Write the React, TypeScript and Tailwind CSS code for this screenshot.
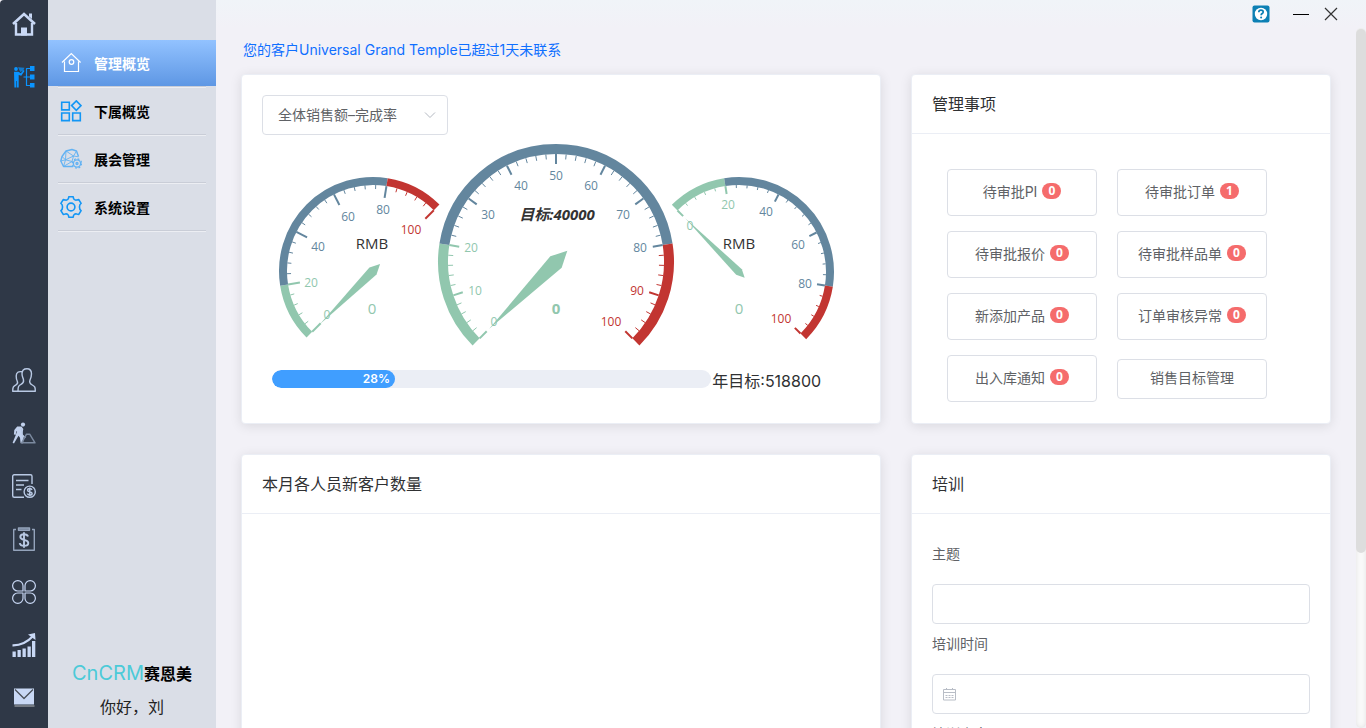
import { useState } from "react";
import type { ReactNode } from "react";

const GREEN = "#91c7ae";
const BLUE = "#63869e";
const RED = "#c23531";

type Label = { text: string; x: number; y: number };

type GaugeProps = {
  cx: number;
  cy: number;
  r: number;
  start: number;
  end: number;
  width: number;
  splits: number;
  splitLength: number;
  tickLength: number;
  pointer: number;
  labels: Label[];
  children?: ReactNode;
};

const bands = [
  { from: 0, to: 0.2, color: GREEN },
  { from: 0.2, to: 0.8, color: BLUE },
  { from: 0.8, to: 1, color: RED },
];

function colorAt(t: number) {
  if (t <= 0.2001) return GREEN;
  if (t <= 0.8001) return BLUE;
  return RED;
}

function Gauge({
  cx,
  cy,
  r,
  start,
  end,
  width,
  splits,
  splitLength,
  tickLength,
  pointer,
  labels,
  children,
}: GaugeProps) {
  const point = (t: number, radius: number) => {
    const a = ((start + (end - start) * t) * Math.PI) / 180;
    return [cx + Math.cos(a) * radius, cy - Math.sin(a) * radius];
  };
  const mid = r - width / 2;
  const total = splits * 5;

  // the pointer always rests on 0
  const a = (start * Math.PI) / 180;
  const ux = Math.cos(a);
  const uy = -Math.sin(a);
  const needle = [
    [cx - ux * pointer * 2, cy - uy * pointer * 2],
    [cx + uy * pointer, cy - ux * pointer],
    [cx + ux * r * 0.8, cy + uy * r * 0.8],
    [cx - uy * pointer, cy + ux * pointer],
  ];

  return (
    <g>
      {bands.map((band) => {
        const [x1, y1] = point(band.from, mid);
        const [x2, y2] = point(band.to, mid);
        const large = (band.to - band.from) * Math.abs(end - start) > 180 ? 1 : 0;
        return (
          <path
            key={band.color}
            d={`M${x1} ${y1}A${mid} ${mid} 0 ${large} 1 ${x2} ${y2}`}
            fill="none"
            stroke={band.color}
            strokeWidth={width}
          />
        );
      })}
      {Array.from({ length: total + 1 }, (_, i) => {
        const major = i % 5 === 0;
        const [x1, y1] = point(i / total, r - width);
        const [x2, y2] = point(i / total, r - width - (major ? splitLength : tickLength));
        return (
          <line
            key={i}
            x1={x1}
            y1={y1}
            x2={x2}
            y2={y2}
            stroke={colorAt(i / total)}
            strokeWidth={major ? 2 : 1}
          />
        );
      })}
      {labels.map((label, i) => (
        <text
          key={label.text}
          x={label.x}
          y={label.y}
          fontSize="12"
          textAnchor="middle"
          dominantBaseline="central"
          fill={colorAt(i / (labels.length - 1))}
        >
          {label.text}
        </text>
      ))}
      <polygon points={needle.map((p) => p.join(",")).join(" ")} fill={GREEN} />
      {children}
    </g>
  );
}

function Gauges() {
  return (
    <svg
      viewBox="0 0 598 225"
      className="block w-full font-['Open_Sans','Noto_Sans_CJK_SC',sans-serif]"
      role="img"
      aria-label="全体销售额-完成率"
    >
      <Gauge
        cx={111}
        cy={136}
        r={94}
        start={225}
        end={45}
        width={8}
        splits={5}
        splitLength={12}
        tickLength={4}
        pointer={5}
        labels={[
          { text: "0", x: 65, y: 179 },
          { text: "20", x: 49, y: 147 },
          { text: "40", x: 56, y: 111 },
          { text: "60", x: 86, y: 81 },
          { text: "80", x: 121, y: 74 },
          { text: "100", x: 149, y: 94 },
        ]}
      >
        <text x="110" y="108" fontSize="15" textAnchor="middle" dominantBaseline="central" fill="#333">
          RMB
        </text>
        <text x="110" y="173" fontSize="15" textAnchor="middle" dominantBaseline="central" fill={GREEN}>
          0
        </text>
      </Gauge>
      <Gauge
        cx={477}
        cy={137}
        r={95}
        start={135}
        end={-45}
        width={8}
        splits={5}
        splitLength={8}
        tickLength={3}
        pointer={4}
        labels={[
          { text: "0", x: 428, y: 90 },
          { text: "20", x: 466, y: 69 },
          { text: "40", x: 504, y: 76 },
          { text: "60", x: 536, y: 109 },
          { text: "80", x: 543, y: 148 },
          { text: "100", x: 519, y: 183 },
        ]}
      >
        <text x="477" y="108" fontSize="15" textAnchor="middle" dominantBaseline="central" fill="#333">
          RMB
        </text>
        <text x="477" y="173" fontSize="15" textAnchor="middle" dominantBaseline="central" fill={GREEN}>
          0
        </text>
      </Gauge>
      <Gauge
        cx={294}
        cy={127}
        r={118}
        start={225}
        end={-45}
        width={10}
        splits={10}
        splitLength={10}
        tickLength={5}
        pointer={8}
        labels={[
          { text: "0", x: 232, y: 186 },
          { text: "10", x: 213, y: 155 },
          { text: "20", x: 209, y: 112 },
          { text: "30", x: 226, y: 79 },
          { text: "40", x: 259, y: 50 },
          { text: "50", x: 294, y: 40 },
          { text: "60", x: 329, y: 50 },
          { text: "70", x: 361, y: 79 },
          { text: "80", x: 378, y: 112 },
          { text: "90", x: 375, y: 155 },
          { text: "100", x: 349, y: 186 },
        ]}
      >
        <text
          x="295"
          y="79"
          fontSize="15"
          fontWeight="bold"
          fontStyle="italic"
          textAnchor="middle"
          dominantBaseline="central"
          fill="#333"
        >
          目标:40000
        </text>
        <text
          x="294"
          y="173"
          fontSize="15"
          fontWeight="bold"
          textAnchor="middle"
          dominantBaseline="central"
          fill={GREEN}
        >
          0
        </text>
      </Gauge>
    </svg>
  );
}

function RailIcon({ children }: { children: ReactNode }) {
  return (
    <svg
      viewBox="0 0 24 24"
      className="size-6"
      fill="none"
      stroke="#b9c9e4"
      strokeWidth="1.4"
      strokeLinejoin="round"
      aria-hidden="true"
    >
      {children}
    </svg>
  );
}

const railTop = [
  {
    name: "首页",
    icon: (
      <RailIcon>
        <path d="M1 12 12 2 23 12" stroke="#c9d8f5" strokeWidth="2.6" strokeLinejoin="miter" />
        <path d="M17 1.5h3V7l-3-2.5z" fill="#c9d8f5" stroke="none" />
        <path d="M4 11v11.5h16V11" stroke="#c9d8f5" strokeWidth="2.4" strokeLinejoin="miter" />
        <path d="M9 15.5h6v8H9z" fill="#c9d8f5" stroke="none" />
      </RailIcon>
    ),
  },
  {
    name: "管理",
    icon: (
      <RailIcon>
        <g fill="#0a94ff" stroke="none">
          <circle cx="4" cy="4" r="1.9" />
          <path d="M2 6.800h4.500l2.300 1.500L11.500 5l1 .9L9.300 10.800l-2.600-.7V22.500H4.900V16h-.6v6.500H2.400z" />
          <path d="M6 2.200 12.500 2.800l-1.300 3-3 1.200z" opacity=".7" />
          <path d="M18 1h4.500v5H18zM18 9.500h4.500v5H18zM18 18h4.500v4.500H18z" />
        </g>
        <path d="M18 3.500h-3.500v17H18M11.500 12H18" stroke="#0a94ff" strokeWidth="1.2" />
      </RailIcon>
    ),
  },
];

const railBottom = [
  {
    name: "客户",
    icon: (
      <RailIcon>
        <path d="M15 .8c-3.500 0-5 2-5 5 0 3 1 3.500 1.500 6 .5 2.500-.5 3.500-2.500 4.500-2.500 1.200-3 2.200-3 6.900h17.300c0-4-.3-4.800-3-6.200-2.500-1.300-3.300-2.500-2.300-5 1.200-2.700 1.500-3.700 1.500-6.200 0-3-1.500-5-4.500-5Z" />
        <path d="M10.200 3.800C6.500 3 4.200 4.500 4.200 8c0 2 .2 3.500 1 5 .8 1.600.2 3-1.200 3.800C1.500 18.200.7 18.800.7 23.200H6" />
      </RailIcon>
    ),
  },
  {
    name: "工地",
    icon: (
      <RailIcon>
        <g fill="#c1d0ec" stroke="none">
          <circle cx="11" cy="3.600" r="2.100" />
          <path d="M5.200 5.500 9.500 5.600l1.800 2.400-1 5 1.400 2-.6 7.200H8.600l-.6-5.500-1.500-2L4.300 18.500 2 22.400.6 21.700 3.800 14l1.300-4-1 .8-.3 3-1.900-.4.400-4.400z" />
        </g>
        <path d="m9.500 8 .8 6 3 3" />
        <path d="m9.700 21.800 4.800-8.600h3.200l5.300 8.600Z" stroke="#7c8aa0" />
      </RailIcon>
    ),
  },
  {
    name: "账单",
    icon: (
      <RailIcon>
        <path d="M12 23.200H2.200A1.500 1.500 0 0 1 .7 21.700V2.200A1.500 1.500 0 0 1 2.200.7h16.300A1.500 1.500 0 0 1 20 2.200V10" />
        <path d="M4 6.500h12.500M4 11h8M4 15.500h5.500" />
        <circle cx="17.700" cy="17.700" r="5.600" />
        <path
          d="M20 15.900c-.4-.9-1.200-1.300-2.200-1.300-1.300 0-2.200.6-2.200 1.600 0 2.200 4.500.9 4.500 3.200 0 1-.9 1.600-2.300 1.600-1.200 0-2.100-.5-2.400-1.400M17.800 13.400v8.700"
          strokeWidth="1.500"
        />
      </RailIcon>
    ),
  },
  {
    name: "报销",
    icon: (
      <RailIcon>
        <path d="M4 2.500H1.700v20.800h20.600V2.500H20" stroke="#94a3bb" />
        <path d="M6.500 1h11v2.300h-11z" stroke="#94a3bb" fill="#66758c" />
        <path
          d="M16 9.500c-.5-1.700-2-2.300-4-2.300-2.200 0-3.700 1-3.700 2.800 0 4 8 1.800 8 6 0 1.800-1.700 2.900-4.200 2.900-2.400 0-4-.9-4.400-2.800M12 5.300v15.500"
          strokeWidth="1.900"
        />
      </RailIcon>
    ),
  },
  {
    name: "应用",
    icon: (
      <RailIcon>
        <path
          d="M11 11H5.800A5.200 5.200 0 1 1 11 5.800ZM13 11V5.800a5.200 5.200 0 1 1 5.200 5.200ZM11 13v5.200a5.200 5.200 0 1 1-5.200-5.200ZM13 13h5.200a5.200 5.200 0 1 1-5.200 5.200Z"
          stroke="#c9d8f5"
          strokeWidth="1.2"
        />
      </RailIcon>
    ),
  },
  {
    name: "统计",
    icon: (
      <RailIcon>
        <path
          d="M.5 18.500h3.300V24H.5zM5.500 17h3.300v7H5.500zM10.500 15.500h3.300V24h-3.300zM15.500 13.500h3.300V24h-3.300zM20 8h3.300v16H20z"
          fill="#c9d8f5"
          stroke="none"
        />
        <path d="M.5 12.300C9 12.500 15 9.500 20.500 3.500" stroke="#c9d8f5" strokeWidth="2.2" />
        <path d="m16 1.500 7-1.500.5 7z" fill="#c9d8f5" stroke="none" />
      </RailIcon>
    ),
  },
  {
    name: "邮件",
    icon: (
      <RailIcon>
        <path d="M2 2.500h20v16H2z" fill="#c9d8f5" stroke="none" />
        <path d="m3 3.500 9 9 9-9" stroke="#4a4f58" strokeWidth="1.3" />
        <path d="M2.500 20h20" stroke="#8b8f96" strokeWidth="1.5" />
      </RailIcon>
    ),
  },
];

function MenuIcon({ children, color = "#1296f5" }: { children: ReactNode; color?: string }) {
  return (
    <svg
      viewBox="0 0 22 22"
      className="size-[22px] shrink-0"
      fill="none"
      stroke={color}
      strokeWidth="1.6"
      aria-hidden="true"
    >
      {children}
    </svg>
  );
}

const menu = [
  {
    name: "管理概览",
    icon: (
      <MenuIcon color="#fff">
        <path d="M2 10.500 11.300 1.500 20.600 10.500M4.500 9.500v10h14v-10" strokeWidth="1.2" />
        <circle cx="11.500" cy="10" r="2.300" strokeWidth="1.2" />
      </MenuIcon>
    ),
  },
  {
    name: "下属概览",
    icon: (
      <MenuIcon>
        <path d="M1.700 2.300h7.600v7.600H1.700zM1.700 13h7.600v7.600H1.700zM12.700 13h7.600v7.600h-7.600zM16.300.9l4.700 4.700-4.700 4.700-4.700-4.700z" />
      </MenuIcon>
    ),
  },
  {
    name: "展会管理",
    icon: (
      <MenuIcon color="#62b2f3">
        <path
          d="M13 18.500H3.500L.8 13 2 8.500 6 3l6-1.500 4.500 1.500 2 5.500"
          strokeWidth="1.4"
          strokeLinejoin="round"
        />
        <path
          d="M2 8.500l3.500 3.300L6 3l7.500 5 3-5M13.500 8l-1.500 5.500-6.500-1.700 8-3.800 5 .8M5.500 11.800 3.500 18.500l8.500-5M5.500 11.800.8 13"
          strokeWidth=".9"
        />
        <circle cx="17" cy="15.500" r="5" fill="#dadee7" stroke="none" />
        <circle cx="17" cy="15.500" r="3.600" strokeWidth="1.3" />
        <circle cx="17" cy="15.500" r="4.700" strokeWidth="1.2" strokeDasharray="1.850 1.850" />
        <circle cx="17" cy="15.500" r="1" strokeWidth="1.3" />
      </MenuIcon>
    ),
  },
  {
    name: "系统设置",
    icon: (
      <MenuIcon>
        <path
          d="M8.800.8h4.400c.2 2.500 1.400 3.700 3.600 3.200l2-.4 2.300 3.800c-2.200 1.300-2.200 5.900 0 7.200l-2.300 3.800-2-.4c-2.200-.5-3.400.7-3.600 3.200H8.800c-.2-2.500-1.400-3.700-3.600-3.200l-2 .4L.9 14.600c2.200-1.300 2.200-5.900 0-7.200l2.300-3.800 2 .4c2.200.5 3.400-.7 3.600-3.200Z"
          strokeLinejoin="round"
        />
        <circle cx="11" cy="11" r="3.900" />
      </MenuIcon>
    ),
  },
];

const tasks = [
  { name: "待审批PI", count: 0 },
  { name: "待审批订单", count: 1 },
  { name: "待审批报价", count: 0 },
  { name: "待审批样品单", count: 0 },
  { name: "新添加产品", count: 0 },
  { name: "订单审核异常", count: 0 },
  { name: "出入库通知", count: 0 },
  { name: "销售目标管理" },
];

function Card({ title, children }: { title?: string; children?: ReactNode }) {
  return (
    <section className="rounded border border-[#ebeef5] bg-white shadow-[0_2px_12px_rgba(0,0,0,0.1)]">
      {title && (
        <h2 className="border-b border-[#ebeef5] px-5 py-[17px] text-base text-[#303133]">
          {title}
        </h2>
      )}
      {children}
    </section>
  );
}

export default function App() {
  const [active, setActive] = useState("管理概览");

  return (
    <div className="flex h-screen overflow-hidden bg-[#f2f1f7] font-[Inter,'Noto_Sans_CJK_SC',sans-serif] text-sm">
      <nav className="flex w-12 shrink-0 flex-col items-center justify-between rounded-tl bg-[#2f3847] pt-3 pb-[18px]">
        <div className="flex flex-col gap-[29px]">
          {railTop.map((item) => (
            <button key={item.name} title={item.name} aria-label={item.name}>
              {item.icon}
            </button>
          ))}
        </div>
        <div className="flex flex-col gap-[29px]">
          {railBottom.map((item) => (
            <button key={item.name} title={item.name} aria-label={item.name}>
              {item.icon}
            </button>
          ))}
        </div>
      </nav>

      <aside className="flex w-[168px] shrink-0 flex-col justify-between bg-[#dadee7] pt-10 pb-[7px]">
        <ul>
          {menu.map((item) => (
            <li key={item.name}>
              <button
                onClick={() => setActive(item.name)}
                className={
                  item.name === active
                    ? "flex h-[46px] w-full items-center gap-3 bg-linear-to-b from-[#92c2ff] to-[#5e97e4] pl-3 font-bold text-white"
                    : "flex h-[46px] w-full items-center gap-3 pl-3 font-bold text-black"
                }
              >
                {item.icon}
                <span className="pt-0.5">{item.name}</span>
              </button>
              <div className="mx-2.5 h-0.5 border-t border-b border-t-[#c9cdd7] border-b-[#eceef3]" />
            </li>
          ))}
        </ul>
        <div className="text-center">
          <p className="text-base leading-9 font-bold text-black">
            <span className="text-xl font-normal text-[#4ccad8]">CnCRM</span>赛恩美
          </p>
          <p className="pt-px text-base leading-7 text-[#222]">你好，刘</p>
        </div>
      </aside>

      <main className="flex min-w-0 flex-1 flex-col">
        <header className="flex h-7 shrink-0 items-center justify-end bg-linear-to-b from-[#f0f4f8] to-[#f2f1f7] pr-7">
          <button aria-label="帮助" className="mr-[23px]">
            <svg viewBox="0 0 18 18" className="size-[18px]" aria-hidden="true">
              <rect x=".5" y=".5" width="17" height="17" rx="2" fill="#0d80b4" />
              <circle cx="9" cy="9" r="6.200" fill="#fff" />
              <path
                d="M6.800 7.200c0-1.400 1-2.100 2.200-2.100s2.200.8 2.200 1.900c0 1.600-2.100 1.500-2.100 3.200"
                fill="none"
                stroke="#0d80b4"
                strokeWidth="1.7"
              />
              <circle cx="9.100" cy="12.500" r="1" fill="#0d80b4" />
            </svg>
          </button>
          <button aria-label="最小化" className="mr-[15px]">
            <svg viewBox="0 0 16 16" className="size-4" aria-hidden="true">
              <path d="M0 8.500h16" stroke="#000" />
            </svg>
          </button>
          <button aria-label="关闭">
            <svg viewBox="0 0 14 14" className="size-3.5" aria-hidden="true">
              <path d="m1 1 12 12M13 1 1 13" stroke="#333" strokeWidth="1.2" />
            </svg>
          </button>
        </header>

        <div className="flex min-h-0 flex-1">
          <div className="min-w-0 flex-1 overflow-hidden px-[25px]">
            <p className="px-0.5 pt-2 pb-2.5 leading-7">
              <a href="#customers" className="text-[#0f6fff]">
                您的客户Universal Grand Temple已超过1天未联系
              </a>
            </p>
            <div className="grid grid-cols-[32fr_21fr] gap-[30px]">
              <Card>
                <div className="px-5 pt-5 pb-[25px]">
                  <div className="relative w-[186px]">
                    <select
                      aria-label="图表类型"
                      className="h-10 w-full appearance-none rounded border border-[#dcdfe6] bg-white px-[15px] text-[#606266]"
                    >
                      <option>全体销售额–完成率</option>
                    </select>
                    <svg
                      viewBox="0 0 12 12"
                      className="pointer-events-none absolute top-3.5 right-3 size-3"
                      fill="none"
                      stroke="#b4b9c2"
                      aria-hidden="true"
                    >
                      <path d="m1 3.500 5 5 5-5" />
                    </svg>
                  </div>
                  <Gauges />
                  <div className="flex h-[38px] items-center px-2.5">
                    <div className="h-[18px] w-[76%] overflow-hidden rounded-full bg-[#ebeef5]">
                      <div
                        className="h-full rounded-full bg-[#409eff] pr-[5px] text-right text-xs leading-[18px] font-semibold text-white"
                        style={{ width: "28%" }}
                      >
                        28%
                      </div>
                    </div>
                    <span className="pt-1 pl-px text-base whitespace-nowrap text-[#303133]">
                      年目标:518800
                    </span>
                  </div>
                </div>
              </Card>

              <Card title="管理事项">
                <div className="grid grid-cols-[150px_150px] items-center gap-x-5 gap-y-[15px] px-[35px] pt-[35px] pb-[21px]">
                  {tasks.map((task) => (
                    <button
                      key={task.name}
                      className={
                        task.count === undefined
                          ? "h-10 rounded border border-[#dcdfe6] pb-0.5 text-[#606266]"
                          : "flex h-[47px] items-center justify-center gap-[5px] rounded border border-[#dcdfe6] pb-0.5 text-[#606266]"
                      }
                    >
                      {task.name}
                      {task.count !== undefined && (
                        <span className="mb-0.5 h-4 w-[19px] rounded-full bg-[#f56c6c] font-['Open_Sans',sans-serif] text-xs leading-4 font-bold text-white">
                          {task.count}
                        </span>
                      )}
                    </button>
                  ))}
                </div>
              </Card>

              <Card title="本月各人员新客户数量" />

              <Card title="培训">
                <form className="flex flex-col p-5 text-[#606266]">
                  <label htmlFor="topic" className="mb-2.5 leading-10">
                    主题
                  </label>
                  <input id="topic" className="h-10 rounded border border-[#dcdfe6] px-[15px]" />
                  <label htmlFor="time" className="mb-2.5 leading-10">
                    培训时间
                  </label>
                  <div className="flex h-10 items-center rounded border border-[#dcdfe6] px-2.5">
                    <svg
                      viewBox="0 0 14 14"
                      className="size-3.5"
                      fill="none"
                      stroke="#b8bdc6"
                      aria-hidden="true"
                    >
                      <path d="M.5 2.500h12v10.500H.5zM.5 5.500h12M3.500 1v2M9.500 1v2" />
                      <path d="M2.500 8.500h8M2.500 10.500h8" strokeDasharray="2 1" />
                    </svg>
                    <input id="time" className="ml-1.5 min-w-0 flex-1 outline-none" />
                  </div>
                  <label htmlFor="content" className="mb-2.5 leading-10">
                    培训内容
                  </label>
                  <textarea id="content" rows={4} className="rounded border border-[#dcdfe6] px-[15px]" />
                </form>
              </Card>
            </div>
          </div>
          <div className="w-2.5 shrink-0 rounded-full bg-[#fafafa] pt-px shadow-[inset_0_0_5px_rgba(0,0,0,0.1)]">
            <div className="h-3/4 rounded-full bg-[#dddddd]" />
          </div>
        </div>
      </main>
    </div>
  );
}
